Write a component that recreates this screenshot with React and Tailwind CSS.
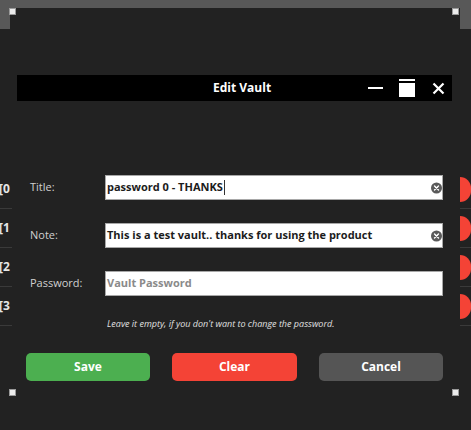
import React from 'react'

const font = { fontFamily: '"Open Sans", "Noto Sans", sans-serif' }

function Handle() {
    return <div className="w-[7px] h-[7px] bg-[#ececec] border border-[#9a9a9a]" />
}

function ClearIcon() {
    return (
        <span className="absolute right-[0px] top-1/2 -translate-y-1/2 w-[11px] h-[11px] rounded-full bg-[#5a5a5a] flex items-center justify-center">
            <svg width="7" height="7" viewBox="0 0 7 7">
                <path d="M1.5 1.5 L5.5 5.5 M5.5 1.5 L1.5 5.5" stroke="#fff" strokeWidth="1.4" strokeLinecap="round" />
            </svg>
        </span>
    )
}

function Field({ label, children, clear }) {
    return (
        <div className="flex items-center">
            <span className="w-[93px] shrink-0 pl-[18px] text-[11px] text-[#d0d0d0]">{label}</span>
            <div className="relative w-[338px] shrink-0 h-[25px] bg-white border border-[#a8a8a8] flex items-center pl-[1px] text-[11px] font-bold text-[#1c1c1c] whitespace-nowrap">
                {children}
                {clear && <ClearIcon />}
            </div>
        </div>
    )
}

export default function App() {
    const sideRows = ['[0', '[1', '[2', '[3']

    return (
        <div className="w-[471px] h-[430px] bg-[#222222] overflow-hidden relative" style={font}>
            {/* window frame behind */}
            <div className="flex h-[29px]">
                <div className="w-[10px] bg-[#585858]" />
                <div className="flex-1 flex flex-col">
                    <div className="h-[8px] bg-[#585858]" />
                </div>
                <div className="w-[11px] bg-[#585858]" />
            </div>

            <div className="flex h-[401px]">
                {/* left list behind the dialog */}
                <div className="w-[12px] pt-[141px] flex flex-col overflow-hidden">
                    {sideRows.map((r) => (
                        <div key={r} className="h-[39px] flex items-center border-b border-[#3a3a3a] text-[12px] font-bold text-[#e6e6e6] whitespace-nowrap -ml-[1px]">
                            {r}
                        </div>
                    ))}
                </div>

                {/* dialog */}
                <div className="w-[448px] flex flex-col">
                    <div className="ml-[5px] w-[435px] h-[26px] mt-[46px] bg-black flex items-center">
                        <span className="ml-[196px] text-[12px] font-bold text-white">Edit Vault</span>
                        <div className="ml-auto flex items-center mr-[7px]">
                            <div className="w-[15px] h-[2px] bg-white" />
                            <div className="ml-[16px] w-[16px] h-[18px] flex flex-col">
                                <div className="h-[2px] bg-white" />
                                <div className="mt-[2px] flex-1 bg-white" />
                            </div>
                            <svg className="ml-[17px]" width="13" height="13" viewBox="0 0 13 13">
                                <path d="M1.5 1.5 L11.5 11.5 M11.5 1.5 L1.5 11.5" stroke="#fff" strokeWidth="2.2" />
                            </svg>
                        </div>
                    </div>

                    <div className="mt-[74px] flex flex-col gap-[23px]">
                        <Field label="Title:" clear>
                            password 0 - THANKS
                            <span className="w-[1px] h-[15px] bg-[#333] ml-[1px]" />
                        </Field>
                        <Field label="Note:" clear>
                            This is a test vault.. thanks for using the product
                        </Field>
                        <Field label="Password:">
                            <span className="text-[#8a8a8a] font-bold">Vault Password</span>
                        </Field>
                    </div>

                    <p className="mt-[21px] ml-[95px] text-[9px] italic text-[#e0e0e0]">
                        Leave it empty, if you don't want to change the password.
                    </p>

                    <div className="mt-[22px] ml-[14px] flex gap-[22px]">
                        <button className="w-[124px] h-[28px] rounded-[5px] bg-[#4caf50] text-white text-[12px] font-bold">Save</button>
                        <button className="w-[125px] h-[28px] rounded-[5px] bg-[#f44336] text-white text-[12px] font-bold">Clear</button>
                        <button className="w-[124px] h-[28px] rounded-[5px] bg-[#555555] text-white text-[12px] font-bold">Cancel</button>
                    </div>
                </div>

                {/* right list behind the dialog */}
                <div className="w-[11px] pt-[141px] flex flex-col overflow-hidden">
                    {sideRows.map((r) => (
                        <div key={r} className="h-[39px] flex items-center border-b border-[#3a3a3a]">
                            <div className="w-[12px] h-[25px] rounded-r-full bg-[#f44336]" />
                        </div>
                    ))}
                </div>
            </div>

            {/* resize handles */}
            <div className="absolute left-[9px] top-[8px]"><Handle /></div>
            <div className="absolute left-[452px] top-[8px]"><Handle /></div>
            <div className="absolute left-[9px] top-[389px]"><Handle /></div>
            <div className="absolute left-[452px] top-[389px]"><Handle /></div>
        </div>
    )
}
